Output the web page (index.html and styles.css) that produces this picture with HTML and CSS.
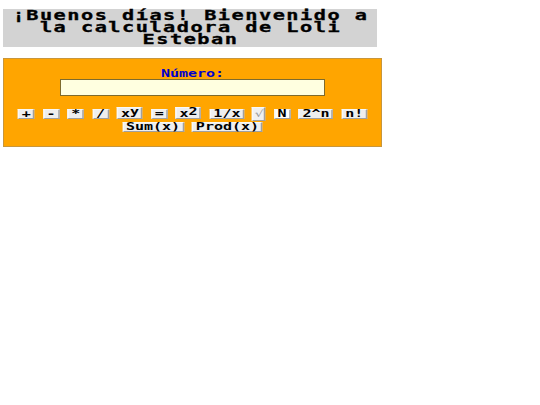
FILE: index.html
```html
<!DOCTYPE html>
<html lang="es">
<head>
<meta charset="utf-8">
<title>Calculadora</title>
<link rel="stylesheet" href="styles.css">
</head>
<body>
<h1 class="title"><span class="title-text">¡Buenos días! Bienvenido a la calculadora de Loli Esteban</span></h1>
<div class="calc">
  <label class="label" for="num">Número:</label>
  <input id="num" class="num" type="text">
  <div class="keys">
    <button class="key">+</button>
    <button class="key">-</button>
    <button class="key">*</button>
    <button class="key">/</button>
    <button class="key">x<sup class="sup">y</sup></button>
    <button class="key">=</button>
    <button class="key">x<sup class="sup">2</sup></button>
    <button class="key">1/x</button>
    <button class="key key-root">√</button>
    <button class="key key-white">N</button>
    <button class="key">2^n</button>
    <button class="key">n!</button>
    <button class="key">Sum(x)</button>
    <button class="key">Prod(x)</button>
  </div>
</div>
</body>
</html>
```
FILE: styles.css
```css
body {
  margin: 0;
  padding: 9px 0 0 3px;
  background: #ffffff;
  font-family: "DejaVu Sans Mono", "Liberation Mono", monospace;
}

.title {
  margin: 0;
  width: 374px;
  padding: 0 0 2px;
  background: #d3d3d3;
  font-weight: bold;
}

.title-text {
  display: block;
  width: 249px;
  margin: 0 auto;
  text-align: center;
  font: bold 13.5px/12px "DejaVu Sans Mono", monospace;
  letter-spacing: 1px;
  color: #000000;
  -webkit-text-stroke: 0.3px #000000;
  transform: scaleX(1.5);
  transform-origin: 50% 0;
}

.calc {
  margin-top: 11px;
  width: 377px;
  border: 1px solid #c8963c;
  background: #ffa500;
  padding: 10px 0 14px;
}

.label {
  display: block;
  text-align: center;
  font: bold 10px/10px "DejaVu Sans Mono", monospace;
  color: #0000cc;
  transform: scaleX(1.5);
  transform-origin: 50% 0;
}

.num {
  display: block;
  margin: 0 auto;
  box-sizing: border-box;
  width: 265px;
  height: 17px;
  padding: 0;
  border: 1px solid #7d6b2e;
  background: #ffffe0;
}

.keys {
  width: 251px;
  margin: 11px auto 0;
  display: flex;
  flex-wrap: wrap;
  justify-content: center;
  align-items: baseline;
  column-gap: 5.5px;
  row-gap: 1px;
  transform: scaleX(1.5);
  transform-origin: 50% 0;
}

.key {
  margin: 0;
  padding: 0 1.5px;
  border: 1px solid;
  border-color: #f8f8f8 #a0a0a0 #a0a0a0 #f8f8f8;
  border-radius: 0;
  background: #eeeeee;
  color: #000000;
  font: bold 10px/8px "DejaVu Sans Mono", monospace;
  appearance: none;
}

.sup {
  font-size: 1em;
  line-height: 8px;
  vertical-align: 2px;
}

.key-white {
  background: #ffffff;
}

.key-root {
  padding: 0 0.5px;
  font: normal 9px/12px "DejaVu Sans", sans-serif;
  color: #999999;
  background: #f0f0f0;
}
```
